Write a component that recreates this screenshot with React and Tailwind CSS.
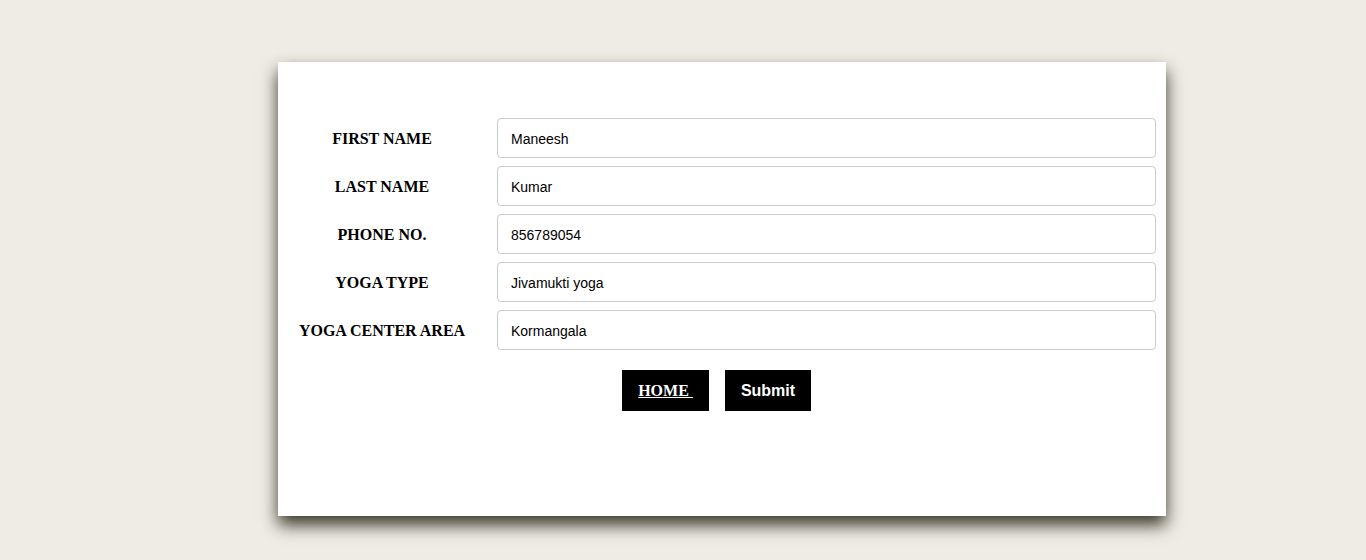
import React, { useState } from 'react';

const fields = [
    { key: 'first', label: 'FIRST NAME', value: 'Maneesh' },
    { key: 'last', label: 'LAST NAME', value: 'Kumar' },
    { key: 'phone', label: 'PHONE NO.', value: '856789054' },
    { key: 'type', label: 'YOGA TYPE', value: 'Jivamukti yoga' },
    { key: 'area', label: 'YOGA CENTER AREA', value: 'Kormangala' }
];

export default function App() {
    const [values, setValues] = useState(
        Object.fromEntries(fields.map(f => [f.key, f.value]))
    );

    return (
        <div className="min-h-[560px] w-full bg-[#efece5] pt-[62px] pb-[44px]">
            <div className="ml-[278px] w-[888px] h-[454px] bg-white shadow-[0_9px_16px_#3a372a] pt-[56px] pr-[10px]">
                <div className="flex flex-col gap-[8px]">
                    {fields.map(f => (
                        <div key={f.key} className="flex items-center h-[40px]">
                            <label
                                className="w-[208px] pt-[2px] text-center font-bold text-[16px] text-black"
                                style={{ fontFamily: '"Liberation Serif", "Times New Roman", serif' }}
                            >
                                {f.label}
                            </label>
                            <input
                                type="text"
                                value={values[f.key]}
                                onChange={e => setValues({ ...values, [f.key]: e.target.value })}
                                className="ml-[11px] flex-1 h-[40px] border border-[#cccccc] rounded-[4px] px-[13px] pt-[2px] text-[14px] text-black outline-none"
                                style={{ fontFamily: '"Liberation Sans", Arial, sans-serif' }}
                            />
                        </div>
                    ))}
                </div>

                <div className="flex justify-center gap-[16px] mt-[20px] pr-[1px]">
                    <a
                        href="#"
                        className="w-[87px] h-[41px] bg-black text-white font-bold text-[16px] flex items-center justify-center underline"
                        style={{ fontFamily: '"Liberation Serif", "Times New Roman", serif', whiteSpace: 'pre' }}
                    >
                        {'HOME '}
                    </a>
                    <button
                        className="w-[86px] h-[41px] pt-[1px] bg-black text-white font-bold text-[16px] flex items-center justify-center"
                        style={{ fontFamily: '"Liberation Sans", Arial, sans-serif' }}
                    >
                        Submit
                    </button>
                </div>
            </div>
        </div>
    );
}
